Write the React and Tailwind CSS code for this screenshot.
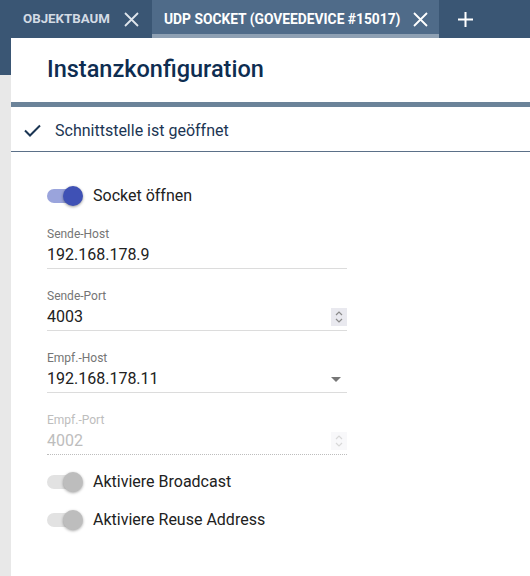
import React from "react";

function Switch({ on, label }) {
  return (
    <div className="flex items-center h-[24px]">
      <div className="relative w-[46px] h-[24px] flex items-center">
        <div className={"w-[34px] h-[14px] rounded-full " + (on ? "bg-[#9aa4dc]" : "bg-[#e2e2e2]")} />
        <div
          className={
            "absolute left-[16px] top-[2px] w-[20px] h-[20px] rounded-full " +
            (on
              ? "bg-[#3f51b5] shadow-[0_1px_3px_rgba(0,0,0,0.4)]"
              : "bg-[#bdbdbd] shadow-[0_1px_3px_rgba(0,0,0,0.35)]")
          }
        />
      </div>
      <span className="text-[16px] text-[#212121]">{label}</span>
    </div>
  );
}

function Spinner({ faded }) {
  return (
    <div className={"w-[16px] h-[18px] flex items-center justify-center " + (faded ? "bg-[#f8f8fa]" : "bg-[#e9e9ef]")}>
      <svg width="10" height="14" viewBox="0 0 10 14" fill="none" stroke={faded ? "#d8d8d8" : "#8a8a8a"} strokeWidth="1.2">
        <path d="M2 5 L5 2 L8 5" />
        <path d="M2 9 L5 12 L8 9" />
      </svg>
    </div>
  );
}

function Field({ label, value, right, disabled }) {
  return (
    <div className="w-[300px]">
      <div className={"h-[15px] leading-[14px] text-[12px] " + (disabled ? "text-[#bdbdbd]" : "text-[#757575]")}>{label}</div>
      <div
        className={
          "h-[27px] flex items-center justify-between " +
          (disabled ? "border-b border-dotted border-[#bdbdbd]" : "border-b border-[#dcdcdc]")
        }
      >
        <span className={"text-[16px] " + (disabled ? "text-[#bdbdbd]" : "text-[#212121]")}>{value}</span>
        {right}
      </div>
    </div>
  );
}

export default function App() {
  return (
    <div className="w-[530px] h-[576px] flex flex-col overflow-hidden bg-white" style={{ fontFamily: "Roboto, 'Liberation Sans', sans-serif" }}>
      {/* Tab bar */}
      <div className="h-[38px] bg-[#3a5674] flex items-stretch shrink-0">
        <div className="flex items-center pl-[23px] pr-[10px] w-[152px]">
          <span className="text-[13.3px] font-bold text-[#d3dbe4]">OBJEKTBAUM</span>
          <svg className="ml-[14px]" width="15" height="15" viewBox="0 0 15 15" stroke="#dfe5ec" strokeWidth="1.8">
            <path d="M1 1 L14 14 M14 1 L1 14" />
          </svg>
        </div>
        <div className="relative flex items-center pl-[12px] w-[287px] bg-[#4f6b89]">
          <span className="text-[13.8px] font-bold text-white">UDP SOCKET (GOVEEDEVICE #15017)</span>
          <svg className="ml-[13px]" width="15" height="15" viewBox="0 0 15 15" stroke="#ffffff" strokeWidth="1.8">
            <path d="M1 1 L14 14 M14 1 L1 14" />
          </svg>
          <div className="absolute left-0 right-0 bottom-0 h-[4px] bg-[#8ea0b3]" />
        </div>
        <div className="flex items-center pl-[19px]">
          <svg width="15" height="15" viewBox="0 0 15 15" stroke="#ffffff" strokeWidth="2">
            <path d="M7.5 0 V15 M0 7.5 H15" />
          </svg>
        </div>
      </div>

      <div className="flex flex-1">
        {/* left strip */}
        <div className="w-[11px] flex flex-col shrink-0">
          <div className="h-[37px] bg-[#3a5674]" />
          <div className="flex-1 bg-[#e8e8e8]" />
        </div>

        {/* panel */}
        <div className="flex-1 flex flex-col bg-white">
          <div className="h-[64px] flex items-center pl-[36px]">
            <h1 className="text-[23.5px] font-medium text-[#0e2d51] leading-none">Instanzkonfiguration</h1>
          </div>
          <div className="h-[5px] bg-[#6b8399]" />
          <div className="h-[45px] pt-[3px] flex items-center border-b border-[#5b7088]">
            <svg className="ml-[13px]" width="17" height="13" viewBox="0 0 17 13" fill="none" stroke="#1b3553" strokeWidth="2">
              <path d="M1 6.5 L6 11.5 L16 1.5" />
            </svg>
            <span className="ml-[14px] text-[16px] text-[#1b3553]">Schnittstelle ist geöffnet</span>
          </div>

          <div className="pl-[36px] flex flex-col">
            <div className="mt-[32px]">
              <Switch on label="Socket öffnen" />
            </div>
            <div className="mt-[19px]">
              <Field label="Sende-Host" value="192.168.178.9" />
            </div>
            <div className="mt-[20px]">
              <Field label="Sende-Port" value="4003" right={<Spinner />} />
            </div>
            <div className="mt-[20px]">
              <Field
                label="Empf.-Host"
                value="192.168.178.11"
                right={
                  <svg className="mr-[6px]" width="10" height="5" viewBox="0 0 10 5">
                    <path d="M0 0 H10 L5 5 Z" fill="#777" />
                  </svg>
                }
              />
            </div>
            <div className="mt-[20px]">
              <Field label="Empf.-Port" value="4002" disabled right={<Spinner faded />} />
            </div>
            <div className="mt-[15px]">
              <Switch label="Aktiviere Broadcast" />
            </div>
            <div className="mt-[14px]">
              <Switch label="Aktiviere Reuse Address" />
            </div>
          </div>
        </div>
      </div>
    </div>
  );
}
